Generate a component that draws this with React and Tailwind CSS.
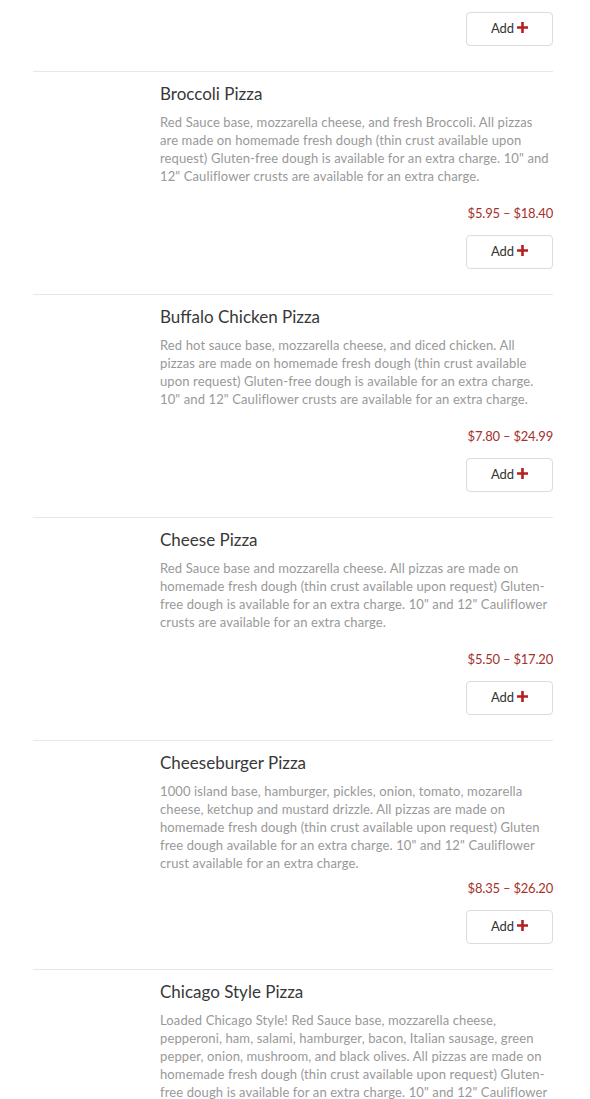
const items = [
  {
    name: "Broccoli Pizza",
    desc: 'Red Sauce base, mozzarella cheese, and fresh Broccoli. All pizzas are made on homemade fresh dough (thin crust available upon request) Gluten-free dough is available for an extra charge. 10" and 12" Cauliflower crusts are available for an extra charge.',
    price: "$5.95 – $18.40",
  },
  {
    name: "Buffalo Chicken Pizza",
    desc: 'Red hot sauce base, mozzarella cheese, and diced chicken. All pizzas are made on homemade fresh dough (thin crust available upon request) Gluten-free dough is available for an extra charge. 10" and 12" Cauliflower crusts are available for an extra charge.',
    price: "$7.80 – $24.99",
  },
  {
    name: "Cheese Pizza",
    desc: 'Red Sauce base and mozzarella cheese. All pizzas are made on homemade fresh dough (thin crust available upon request) Gluten-free dough is available for an extra charge. 10" and 12" Cauliflower crusts are available for an extra charge.',
    price: "$5.50 – $17.20",
  },
  {
    name: "Cheeseburger Pizza",
    desc: '1000 island base, hamburger, pickles, onion, tomato, mozarella cheese, ketchup and mustard drizzle. All pizzas are made on homemade fresh dough (thin crust available upon request) Gluten free dough available for an extra charge. 10" and 12" Cauliflower crust available for an extra charge.',
    price: "$8.35 – $26.20",
  },
  {
    name: "Chicago Style Pizza",
    desc: 'Loaded Chicago Style! Red Sauce base, mozzarella cheese, pepperoni, ham, salami, hamburger, bacon, Italian sausage, green pepper, onion, mushroom, and black olives. All pizzas are made on homemade fresh dough (thin crust available upon request) Gluten-free dough is available for an extra charge. 10" and 12" Cauliflower crusts are available for an extra charge.',
    price: "$9.95 – $29.90",
  },
];

const PlusIcon = () => (
  <svg width="11" height="11" viewBox="0 0 11 11" className="ml-[3px] mb-[3px]">
    <path d="M5.5 0v11M0 5.5h11" stroke="#b3201f" strokeWidth="2.6" />
  </svg>
);

const AddButton = () => (
  <button className="flex items-center justify-center w-[87px] h-[34px] border border-[#dcdcdc] rounded-[4px] bg-white text-[13px] text-[#333] cursor-pointer">
    Add
    <PlusIcon />
  </button>
);

const MenuItem = ({ item }) => (
  <div className="flex border-t border-[#e8e8e8] pt-[11px] pb-[25px]">
    <div className="w-[127px] shrink-0" />
    <div className="flex-1 flex flex-col">
      <h3 className="text-[17px] leading-[22px] text-[#383838] font-normal">{item.name}</h3>
      <p className="mt-2 min-h-[84px] pr-[4px] text-[13px] leading-[18px] tracking-[0.12px] text-[#999]">{item.desc}</p>
      <div className="mt-[7px] text-right text-[13px] leading-[18px] tracking-[-0.2px] text-[#a5322c]">{item.price}</div>
      <div className="mt-[13px] flex justify-end">
        <AddButton />
      </div>
    </div>
  </div>
);

export default function App() {
  return (
    <div className="bg-white min-h-screen overflow-hidden" style={{ fontFamily: "Lato, 'Open Sans', sans-serif" }}>
      <div className="ml-[33px] w-[520px]">
        <div className="flex justify-end pt-3 pb-[25px]">
          <AddButton />
        </div>
        {items.map((item) => (
          <MenuItem key={item.name} item={item} />
        ))}
      </div>
    </div>
  );
}
